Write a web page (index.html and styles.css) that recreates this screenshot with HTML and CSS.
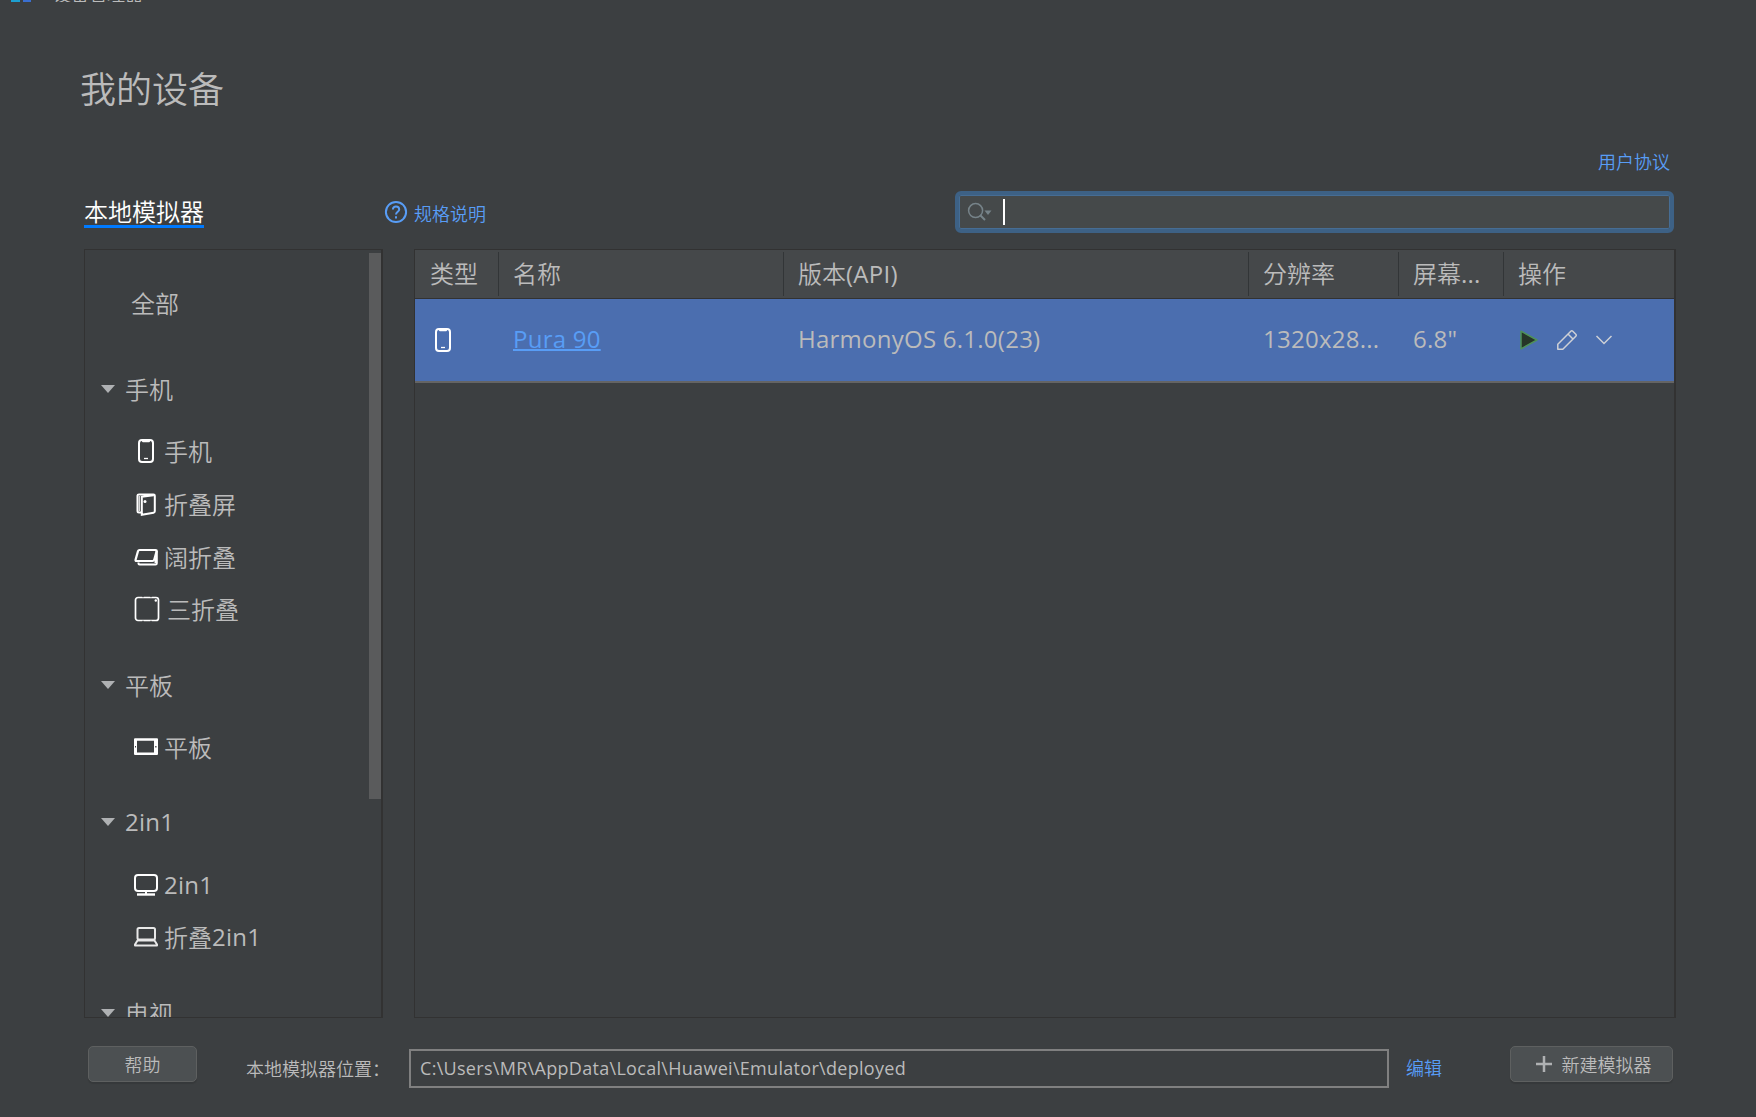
FILE: index.html
```html
<!DOCTYPE html>
<html lang="zh-CN">
<head>
  <meta charset="UTF-8">
  <title>设备管理器</title>
  <link rel="stylesheet" href="styles.css">
</head>
<body>
  <svg class="defs" width="0" height="0">
    <symbol id="icon-phone" viewBox="0 0 26 26">
      <rect x="6" y="2" width="14" height="22" rx="3" fill="none" stroke="#fff" stroke-width="2"/>
      <path d="M9 2h8v1.2q0 1-1 1h-6q-1 0-1-1z" fill="#fff"/>
      <path d="M11 20.5h4" stroke="#fff" stroke-width="1.3"/>
    </symbol>
  </svg>

  <div class="titlebar">
    <span class="logo"></span>
    <span class="titlebar-text">设备管理器</span>
  </div>

  <h1>我的设备</h1>

  <div class="agreement"><a href="#">用户协议</a></div>

  <div class="toolbar">
    <div class="tab">本地模拟器</div>
    <a class="spec" href="#">
      <svg width="24" height="24" viewBox="0 0 24 24" fill="none" stroke="#589df6">
        <circle cx="12" cy="12" r="10.1" stroke-width="2"/>
        <path d="M8.900 9.600c0-1.900 1.300-3.100 3.100-3.100s3.200 1.200 3.200 2.900c0 2.200-3.200 2.500-3.200 5" stroke-width="2"/>
        <path d="M12 16.300v2.100" stroke-width="2"/>
      </svg>
      <span>规格说明</span>
    </a>
    <div class="search">
      <svg width="26" height="20" viewBox="0 0 26 20">
        <circle cx="8.600" cy="8.600" r="7" fill="none" stroke="#768389" stroke-width="1.500"/>
        <path d="M13 13l5 5" stroke="#768389" stroke-width="2"/>
        <path d="M17.500 8.500h7l-3.500 4.500z" fill="#768389"/>
      </svg>
      <span class="caret"></span>
    </div>
  </div>

  <div class="main">
    <div class="sidebar">
      <div class="tree">
        <div class="all">全部</div>

        <div class="group">手机</div>
        <div class="item"><svg width="26" height="26"><use href="#icon-phone"/></svg>手机</div>
        <div class="item">
          <svg width="26" height="26" viewBox="0 0 26 26" fill="none" stroke="#fff">
            <path d="M8 21.500H6Q4.500 21.500 4.500 20V4.600Q4.500 3.500 6 3.500H20.500Q21.800 3.500 21.800 4.700V20.300Q21.800 21.500 20.600 21.700L8.800 23.800V5.800L20.500 4.200" stroke-width="2"/>
            <path d="M6.300 5v15" stroke-width="1"/>
            <circle cx="12" cy="10.500" r="1.500" fill="#fff" stroke="none"/>
          </svg>折叠屏
        </div>
        <div class="item">
          <svg width="26" height="26" viewBox="0 0 26 26" fill="none" stroke="#fff">
            <path d="M6.500 6H22.500Q23.800 6 23.600 7.300L21.300 15.500Q20.900 17 19.500 17H3.500Q2.200 17 2.600 15.600L5 7.200Q5.400 6 6.500 6Z" stroke-width="2.200"/>
            <path d="M5.500 18.500V19.500Q5.500 20.500 6.500 20.500H22.500Q23.800 20.500 23.800 19.200V7M22.500 14v5" stroke-width="2"/>
          </svg>阔折叠
        </div>
        <div class="item wide">
          <svg width="26" height="26" viewBox="0 0 26 26" fill="none" stroke="#fff">
            <rect x="1.500" y="1.500" width="23" height="23" rx="2.500" stroke-width="1.700"/>
            <path d="M8 .7h2M16 .7h2M8 25.300h2M16 25.300h2" stroke="#3c3f41" stroke-width=".8"/>
            <circle cx="21.800" cy="4.500" r="1.200" fill="#fff" stroke="none"/>
          </svg>三折叠
        </div>

        <div class="group">平板</div>
        <div class="item">
          <svg width="26" height="26" viewBox="0 0 26 26">
            <path fill-rule="evenodd" fill="#fff" d="M2 4.300h22q1 0 1 1v14.700q0 1-1 1H2q-1 0-1-1V5.300q0-1 1-1zM4 6.800v11.700h17V6.800z"/>
            <path d="M2 12h1v1.500H2zM22.200 12h1.300v1.500h-1.300z" fill="#3c3f41"/>
          </svg>平板
        </div>

        <div class="group"><span class="latin">2in1</span></div>
        <div class="item">
          <svg width="26" height="26" viewBox="0 0 26 26" fill="none" stroke="#fff">
            <rect x="2" y="3" width="22" height="16" rx="3" stroke-width="2"/>
            <path d="M4 22.500h18" stroke-width="2.400"/>
            <path d="M13 18.500v3.500" stroke-width="2"/>
          </svg><span class="latin">2in1</span>
        </div>
        <div class="item">
          <svg width="26" height="26" viewBox="0 0 26 26" fill="none" stroke="#e8e8e8">
            <rect x="4.500" y="4" width="17.500" height="11.500" rx="1.500" stroke-width="2"/>
            <path d="M4.500 16.500L2 20.500V21.500H24V20.500L21.500 16.500Z" stroke-width="2" stroke-linejoin="round"/>
          </svg>折叠<span class="latin">2in1</span>
        </div>

        <div class="group">电视</div>
      </div>
      <div class="scrollbar"></div>
    </div>

    <div class="table">
      <div class="row head">
        <div>类型</div>
        <div>名称</div>
        <div>版本<span class="latin">(API)</span></div>
        <div>分辨率</div>
        <div>屏幕<span class="latin">...</span></div>
        <div>操作</div>
      </div>
      <div class="row selected">
        <div><svg width="26" height="26"><use href="#icon-phone"/></svg></div>
        <div><a class="latin" href="#">Pura 90</a></div>
        <div><span class="latin">HarmonyOS 6.1.0(23)</span></div>
        <div><span class="latin">1320x28...</span></div>
        <div><span class="latin">6.8"</span></div>
        <div class="actions">
          <svg width="20" height="22" viewBox="0 0 20 22">
            <path d="M2 2.200L18 11 2 19.800z" fill="#263528" stroke="#4f9159" stroke-width="1.500" stroke-linejoin="round"/>
          </svg>
          <svg width="22" height="22" viewBox="0 0 22 22" fill="none" stroke="#ced0d6" stroke-width="1.500" stroke-linejoin="round">
            <path d="M1.800 20.200V15.200L14.800 2.200Q15.800 1.200 16.800 2.200L19.800 5.200Q20.800 6.200 19.800 7.200L6.800 20.200Z"/>
            <path d="M12 5l5 5"/>
          </svg>
          <svg width="18" height="12" viewBox="0 0 18 12" fill="none" stroke="#ced0d6" stroke-width="1.500">
            <path d="M1.500 2L9 9.500 16.500 2"/>
          </svg>
        </div>
      </div>
    </div>
  </div>

  <div class="footer">
    <button class="help">帮助</button>
    <label>本地模拟器位置：</label>
    <div class="path"><span>C:\Users\MR\AppData\Local\Huawei\Emulator\deployed</span></div>
    <a href="#">编辑</a>
    <button class="create">
      <svg width="16" height="16" viewBox="0 0 16 16"><path d="M8 0v16M0 8h16" stroke="#afb1b3" stroke-width="2.500"/></svg>
      新建模拟器
    </button>
  </div>
</body>
</html>
```
FILE: styles.css
```css
* {
  box-sizing: border-box;
}
body {
  margin: 0;
  width: 1756px;
  height: 1117px;
  overflow: hidden;
  background-color: #3c3f41;
  color: #bbbbbb;
  font-family: "Noto Sans CJK SC", sans-serif;
  font-weight: 350;
  font-size: 24px;
  line-height: 36px;
}
a {
  color: #589df6;
  text-decoration: none;
}
.defs {
  display: block;
}
.latin {
  font-family: "Open Sans", sans-serif;
  font-weight: 400;
  letter-spacing: 0.25px;
}

/* bottom edge of the window title */
.titlebar {
  display: flex;
  align-items: flex-end;
  height: 2px;
  padding-left: 11px;
  overflow: hidden;
}
.logo {
  width: 20px;
  height: 2px;
  background: linear-gradient(90deg, #1d9fd0 0 9px, transparent 9px 12px, #3a6fd0 12px);
}
.titlebar-text {
  margin-left: 22px;
  margin-bottom: -1px;
  font-size: 18px;
  line-height: 20px;
}

h1 {
  margin: 58px 0 0 80px;
  font-size: 36px;
  line-height: 54px;
  font-weight: 350;
}
.agreement {
  margin: 33px 86px 0 0;
  font-size: 18px;
  line-height: 28px;
  text-align: right;
}

/* Tab, spec link and search */
.toolbar {
  display: flex;
  margin-top: 16px;
  padding: 0 82px 0 84px;
  height: 58px;
}
.tab {
  height: 37px;
  border-bottom: 3px solid #007aff;
  color: #fff;
  line-height: 40px;
}
.spec {
  display: flex;
  align-items: center;
  gap: 6px;
  height: 42px;
  margin-left: 180px;
  font-size: 18px;
}
.spec span {
  margin-top: 1px;
}
.search {
  display: flex;
  align-items: center;
  width: 719px;
  height: 42px;
  margin-left: auto;
  padding-left: 8px;
  background-color: #45494a;
  border: 4px solid #3d6185;
  border-radius: 6px;
  box-shadow: inset 0 0 0 1px #466d94;
}
.caret {
  width: 2px;
  height: 26px;
  margin-left: 10px;
  margin-bottom: 1px;
  background-color: #fff;
}

.main {
  display: flex;
  gap: 31px;
  height: 769px;
  margin: 0 80px 0 84px;
}
.sidebar {
  display: flex;
  width: 299px;
  border: 1px solid #323232;
  border-right-width: 2px;
  overflow: hidden;
}
.tree {
  flex: 1;
}
.all {
  padding: 35px 0 0 46px;
}
.group {
  display: flex;
  align-items: center;
  height: 60px;
  margin-top: 19px;
  padding-left: 16px;
}
.all + .group {
  margin-top: 38px;
}
.group::before {
  content: "";
  margin-right: 10px;
  border: 7px solid transparent;
  border-top: 8px solid #afb1b3;
  border-bottom: 0;
}
.item {
  display: flex;
  align-items: center;
  height: 52.7px;
  padding-left: 48px;
}
.group + .item {
  margin-top: 6px;
}
.item svg {
  margin-right: 5px;
}
.item.wide svg {
  margin-left: 1px;
  margin-right: 7px;
}
.scrollbar {
  width: 12px;
  height: 546px;
  margin-top: 3px;
  background-color: #5a5b5c;
}

/* Device table */
.table {
  flex: 1;
  border: 1px solid #323232;
  border-right-width: 2px;
}
.row {
  display: grid;
  grid-template-columns: 84px 285px 465px 150px 105px 1fr;
  align-items: center;
}
.row > div {
  padding-left: 14px;
  white-space: nowrap;
}
.row > div:first-child {
  padding-left: 15px;
}
.head {
  height: 49px;
  background-color: #45484a;
  border-bottom: 1px solid #323232;
}
.head > div {
  height: 44px;
  line-height: 42px;
  border-right: 1px solid #323537;
}
.head > div:last-child {
  border-right: 0;
}
.selected {
  height: 84px;
  background-color: #4b6eaf;
  border-bottom: 2px solid #646464;
}
.selected .latin {
  display: block;
  margin-top: -2px;
}
.selected a {
  text-decoration: underline;
  text-decoration-thickness: 2px;
  text-underline-offset: 1px;
}
.selected svg {
  display: block;
}
.actions {
  display: flex;
  align-items: center;
  gap: 17px;
}
.actions svg:first-child {
  margin-left: 1px;
}

/* Bottom bar */
.footer {
  display: flex;
  align-items: flex-start;
  padding: 28px 83px 0 88px;
  font-size: 18px;
}
button {
  display: flex;
  align-items: center;
  justify-content: center;
  height: 36px;
  padding: 0;
  background-color: #4c5052;
  border: 1px solid #5e6060;
  border-radius: 5px;
  box-shadow: 0 2px 1px rgba(0,0,0,0.1);
  color: #bbbbbb;
  font: inherit;
}
.help {
  width: 109px;
}
.create {
  width: 163px;
  margin-left: auto;
  padding-left: 4px;
  gap: 10px;
}
.footer label {
  width: 163px;
  margin-left: 49px;
  margin-top: 4px;
  white-space: nowrap;
}
.path {
  width: 980px;
  height: 39px;
  margin-top: 3px;
  padding-left: 9px;
  border: 2px solid #808080;
  font-family: "Open Sans", sans-serif;
  font-weight: 400;
  letter-spacing: 0.3px;
  line-height: 34px;
}
.footer a {
  margin-left: 17px;
  margin-top: 3px;
}
```
